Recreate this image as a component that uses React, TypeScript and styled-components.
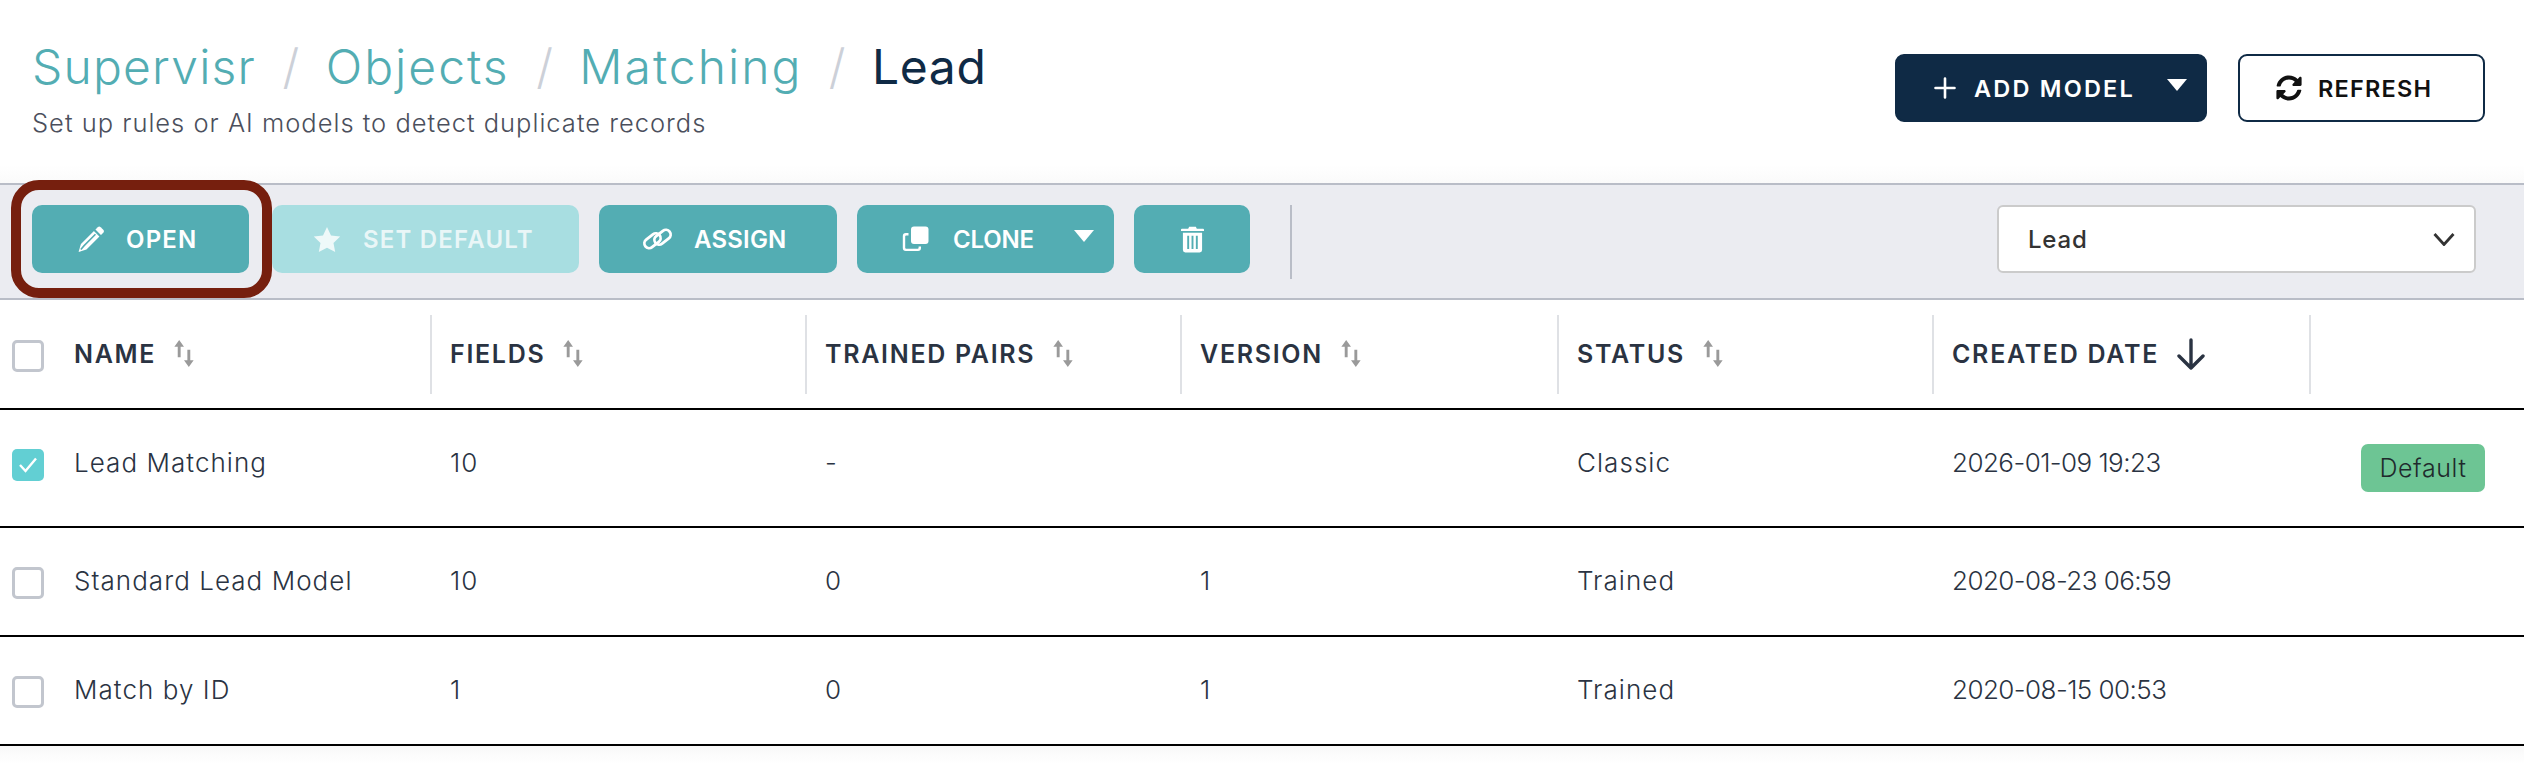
import React from "react";
import styled, { createGlobalStyle } from "styled-components";

const teal = "#53adb3";
const navy = "#0f2a45";

const GlobalStyle = createGlobalStyle`
    html, body {
        margin: 0;
        padding: 0;
        background: #fff;
    }
    body {
        font-family: Inter, "Liberation Sans", sans-serif;
        color: #2a3342;
    }
`;

const Page = styled.div`
    position: relative;
    width: 2524px;
    height: 784px;
    overflow: hidden;
    background: #fff;
`;

const Header = styled.header`
    height: 183px;
    box-sizing: border-box;
    padding: 36px 39px 0 32px;
    display: flex;
    justify-content: space-between;
    align-items: flex-start;
    background: linear-gradient(to bottom, #fff 165px, #fafafa 183px);
`;

const Crumbs = styled.h1`
    margin: 0;
    font-size: 48px;
    line-height: 62px;
    font-weight: 300;
    display: flex;
`;

const Crumb = styled.span<{ $current?: boolean; $tracking: number }>`
    color: ${props => props.$current ? navy : teal};
    font-weight: ${props => props.$current ? 400 : 300};
    letter-spacing: ${props => props.$tracking}px;
`;

const Slash = styled.span`
    color: #ccd0d8;
    margin: 0 26.5px;
    font-weight: 300;
`;

const Subtitle = styled.p`
    margin: 9px 0 0;
    font-size: 25.5px;
    line-height: 32px;
    font-weight: 300;
    color: #4b4f5c;
    letter-spacing: 1px;
`;

const HeaderActions = styled.div`
    display: flex;
    gap: 31px;
    margin-top: 18px;
`;

const HeaderButton = styled.button<{ $dark?: boolean; $width: number }>`
    position: relative;
    width: ${props => props.$width}px;
    height: 68px;
    box-sizing: border-box;
    border-radius: 9px;
    border: 2px solid ${navy};
    background: ${props => props.$dark ? navy : "#fff"};
    color: ${props => props.$dark ? "#fff" : "#111"};
    font: 600 23.5px Inter, sans-serif;
    letter-spacing: ${props => props.$dark ? 2.2 : 1.2}px;
    display: flex;
    align-items: center;
    gap: ${props => props.$dark ? 18 : 16}px;
    padding: 0 0 0 ${props => props.$dark ? 37 : 36}px;
`;

const Toolbar = styled.div`
    height: 117px;
    box-sizing: border-box;
    background: #ebecf1;
    border-top: 2px solid #b9bdc7;
    border-bottom: 2px solid #b9bdc7;
    padding: 20px 48px 0 32px;
    display: flex;
    align-items: flex-start;
`;

const ActionButton = styled.button<{ $width: number; $pad?: number; $gap?: number; $tracking?: number; $disabled?: boolean }>`
    position: relative;
    width: ${props => props.$width}px;
    height: 68px;
    border: none;
    border-radius: 10px;
    background: ${props => props.$disabled ? "#a8dee1" : teal};
    color: ${props => props.$disabled ? "rgba(255,255,255,0.75)" : "#fff"};
    font: 600 24px Inter, sans-serif;
    letter-spacing: ${props => props.$tracking ?? 1.2}px;
    display: flex;
    align-items: center;
    justify-content: ${props => props.$pad ? "flex-start" : "center"};
    gap: ${props => props.$gap ?? 22}px;
    padding: 0 0 0 ${props => props.$pad ?? 0}px;
    flex-shrink: 0;
`;

const ActionGroup = styled.div`
    display: flex;
    gap: 20px;
`;

const OpenGap = styled.span`
    width: 3px;
    margin-left: -20px;
`;

const OpenHighlight = styled.div`
    position: absolute;
    left: 11px;
    top: 180px;
    width: 261px;
    height: 118px;
    box-sizing: border-box;
    border: 10px solid #761f0e;
    border-radius: 28px;
    pointer-events: none;
`;

const Caret = styled.span<{ $top: number; $right: number }>`
    position: absolute;
    top: ${props => props.$top}px;
    right: ${props => props.$right}px;
    width: 0;
    height: 0;
    border-left: 10px solid transparent;
    border-right: 10px solid transparent;
    border-top: 12px solid #fff;
`;

const ToolbarDivider = styled.div`
    width: 2px;
    height: 74px;
    background: #b9bdc7;
    margin-left: 40px;
`;

const ObjectSelect = styled.div`
    margin-left: auto;
    width: 479px;
    height: 68px;
    box-sizing: border-box;
    background: #fff;
    border: 2px solid #cbcbcb;
    border-radius: 6px;
    padding: 0 19px 0 29px;
    display: flex;
    align-items: center;
    justify-content: space-between;
    font-size: 24px;
    font-weight: 500;
    letter-spacing: 0.8px;
    color: #333;
`;

const columns = "74px 356px 375px 375px 377px 375px 377px 1fr";

const HeadRow = styled.div`
    display: grid;
    grid-template-columns: ${columns};
    height: 110px;
    box-sizing: border-box;
    padding-top: 15px;
    border-bottom: 2px solid #000;
`;

const BodyRow = styled.div<{ $height: number }>`
    display: grid;
    grid-template-columns: ${columns};
    height: ${props => props.$height}px;
    box-sizing: border-box;
    border-bottom: 2px solid #000;
`;

const HeadCell = styled.div<{ $divider?: boolean }>`
    height: 79px;
    box-sizing: border-box;
    display: flex;
    align-items: center;
    gap: 17px;
    padding-left: ${props => props.$divider ? 18 : 0}px;
    border-left: ${props => props.$divider ? "2px solid #dfe1e5" : "none"};
    font-size: 25px;
    font-weight: 600;
    color: #2a3342;
    letter-spacing: 1.7px;
    padding-bottom: 2px;
`;

const CheckCell = styled.div<{ $top: number }>`
    padding: ${props => props.$top}px 0 0 12px;
`;

const CheckBox = styled.div<{ $checked?: boolean }>`
    width: 32px;
    height: 32px;
    box-sizing: border-box;
    border-radius: 5px;
    border: ${props => props.$checked ? "none" : "3px solid #c2c6ce"};
    background: ${props => props.$checked ? "#62cfd3" : "#fff"};
    display: flex;
    align-items: center;
    justify-content: center;
`;

const Cell = styled.div<{ $first?: boolean; $date?: boolean }>`
    padding: 37px 0 0 ${props => props.$first ? 0 : 20}px;
    font-size: 26px;
    line-height: 32px;
    font-weight: 300;
    color: #2a3342;
    letter-spacing: ${props => props.$date ? -0.55 : 1.05}px;
`;

const BadgeCell = styled.div`
    padding: 34px 0 0 52px;
`;

const Badge = styled.span`
    display: flex;
    align-items: center;
    justify-content: center;
    width: 124px;
    height: 48px;
    border-radius: 7px;
    background: #6dc594;
    color: #1f2a2c;
    font-size: 25px;
    font-weight: 300;
    letter-spacing: 0.6px;
`;

const BottomFade = styled.div`
    height: 38px;
    background: linear-gradient(to bottom, #f8f8f8, #fff 18px);
`;

function PencilIcon() {
    return (
        <svg width="28" height="27" viewBox="0 0 26 26">
            <path fill="#fff" d="M19.500 1.200a2 2 0 0 1 2.800 0l2.500 2.500a2 2 0 0 1 0 2.800l-2.200 2.200-5.300-5.300z" />
            <path fill="#fff" d="M15.800 4.900l5.300 5.300L8.600 22.700 1 25l2.300-7.600z" />
            <path fill="none" stroke={teal} strokeWidth="1.500" d="M6.400 18.900L17.300 8M3.200 22.600l3.200-3.700" />
        </svg>
    );
}

function StarIcon() {
    return (
        <svg width="30" height="27" viewBox="0 0 28 27" fill="rgba(255,255,255,0.8)">
            <path d="M14 1l4 8.400 9.200 1.200-6.700 6.400 1.700 9.100L14 21.700l-8.200 4.400 1.700-9.100L.8 10.600 10 9.400z" />
        </svg>
    );
}

function LinkIcon() {
    return (
        <svg width="31" height="22" viewBox="0 0 31 22" fill="none" stroke="#fff" strokeWidth="2.800">
            <rect x="1.500" y="8" width="18" height="9.500" rx="4.750" transform="rotate(-38 10.500 12.750)" />
            <rect x="11.500" y="4.500" width="18" height="9.500" rx="4.750" transform="rotate(-38 20.500 9.250)" />
        </svg>
    );
}

function CloneIcon() {
    return (
        <svg width="27" height="27" viewBox="0 0 27 27" fill="#fff">
            <rect x="9" y="0.500" width="17.500" height="17.500" rx="3" />
            <path d="M6.500 7v2.400H4.200a1 1 0 0 0-1 1v11.400a1 1 0 0 0 1 1h11.400a1 1 0 0 0 1-1v-1.300H19v1.600a3 3 0 0 1-3 3H3.800a3 3 0 0 1-3-3V10a3 3 0 0 1 3-3z" />
        </svg>
    );
}

function TrashIcon() {
    return (
        <svg width="23" height="27" viewBox="0 0 24 28" fill="#fff">
            <path d="M8.500 0.800h7l1 2H23a1 1 0 0 1 1 1v1.400H0V3.800a1 1 0 0 1 1-1h6.500z" />
            <path fillRule="evenodd" d="M2 7h20v18a2.500 2.500 0 0 1-2.500 2.500h-15A2.500 2.500 0 0 1 2 25zM6.500 10v14h2V10zM11 10v14h2V10zM15.500 10v14h2V10z" />
        </svg>
    );
}

function RefreshIcon() {
    return (
        <svg width="26" height="26" viewBox="0 0 512 512" fill="#111">
            <path d="M370.720 133.280C339.458 104.008 298.888 87.962 255.848 88c-77.458.068-144.328 53.178-162.791 126.850-1.344 5.363-6.122 9.150-11.651 9.150H24.103c-7.498 0-13.194-6.807-11.807-14.176C33.933 94.924 134.813 8 256 8c66.448 0 126.791 26.136 171.315 68.685L463.030 40.970C478.149 25.851 504 36.559 504 57.941V192c0 13.255-10.745 24-24 24H345.941c-21.382 0-32.090-25.851-16.971-40.971l41.750-41.749zM32 296h134.059c21.382 0 32.090 25.851 16.971 40.971l-41.750 41.750c31.262 29.273 71.835 45.319 114.876 45.280 77.418-.070 144.315-53.144 162.787-126.849 1.344-5.363 6.122-9.150 11.651-9.150h57.304c7.498 0 13.194 6.807 11.807 14.176C478.067 417.076 377.187 504 256 504c-66.448 0-126.791-26.136-171.315-68.685L48.970 471.030C33.851 486.149 8 475.441 8 454.059V320c0-13.255 10.745-24 24-24z" />
        </svg>
    );
}

function PlusIcon() {
    return (
        <svg width="22" height="22" viewBox="0 0 22 22" stroke="#fff" strokeWidth="2.600" strokeLinecap="round">
            <path d="M11 1.500v19M1.500 11h19" />
        </svg>
    );
}

function ChevronIcon() {
    return (
        <svg width="22" height="13" viewBox="0 0 22 13" fill="none" stroke="#333" strokeWidth="2.800">
            <path d="M1.500 1l9.500 10.500L20.500 1" />
        </svg>
    );
}

function SortIcon() {
    return (
        <svg width="22" height="27" viewBox="0 0 22 28" fill="#9a9a9a">
            <path d="M6 0l5 7H7.500v11h-3V7H1z" />
            <path d="M16 28l-5-7h3.500V10h3v11H21z" />
        </svg>
    );
}

function SortDownIcon() {
    return (
        <svg width="30" height="32" viewBox="0 0 30 32" fill="none" stroke="#2a3342" strokeWidth="3.400" strokeLinecap="round" strokeLinejoin="round">
            <path d="M15 2v28M3 18l12 12 12-12" />
        </svg>
    );
}

function CheckMark() {
    return (
        <svg width="20" height="18" viewBox="0 0 20 18" fill="none" stroke="#fff" strokeWidth="2.400">
            <path d="M2 9l5.500 6L18 2.500" />
        </svg>
    );
}

const headings = ["NAME", "FIELDS", "TRAINED PAIRS", "VERSION", "STATUS"];

const rows = [
    { name: "Lead Matching", fields: "10", pairs: "-", version: "", status: "Classic", date: "2026-01-09 19:23", checked: true, isDefault: true, height: 118 },
    { name: "Standard Lead Model", fields: "10", pairs: "0", version: "1", status: "Trained", date: "2020-08-23 06:59", checked: false, isDefault: false, height: 109 },
    { name: "Match by ID", fields: "1", pairs: "0", version: "1", status: "Trained", date: "2020-08-15 00:53", checked: false, isDefault: false, height: 109 },
];

export default function App() {
    return (
        <Page>
            <GlobalStyle />
            <Header>
                <div>
                    <Crumbs>
                        <Crumb $tracking={1.2}>Supervisr</Crumb>
                        <Slash>/</Slash>
                        <Crumb $tracking={2}>Objects</Crumb>
                        <Slash>/</Slash>
                        <Crumb $tracking={2}>Matching</Crumb>
                        <Slash>/</Slash>
                        <Crumb $current $tracking={0.6}>Lead</Crumb>
                    </Crumbs>
                    <Subtitle>Set up rules or AI models to detect duplicate records</Subtitle>
                </div>
                <HeaderActions>
                    <HeaderButton $dark $width={312}>
                        <PlusIcon />
                        ADD MODEL
                        <Caret $top={23} $right={18} />
                    </HeaderButton>
                    <HeaderButton $width={247}>
                        <RefreshIcon />
                        REFRESH
                    </HeaderButton>
                </HeaderActions>
            </Header>
            <Toolbar>
                <ActionGroup>
                    <ActionButton $width={217} $pad={45} $gap={21}><PencilIcon />OPEN</ActionButton>
                    <OpenGap />
                    <ActionButton $width={307} $pad={40} $gap={21} $disabled><StarIcon />SET DEFAULT</ActionButton>
                    <ActionButton $width={238} $pad={43} $gap={21} $tracking={0.2}><LinkIcon />ASSIGN</ActionButton>
                    <ActionButton $width={257} $pad={45} $gap={24} $tracking={-0.2}>
                        <CloneIcon />CLONE
                        <Caret $top={25} $right={20} />
                    </ActionButton>
                    <ActionButton $width={116}><TrashIcon /></ActionButton>
                </ActionGroup>
                <ToolbarDivider />
                <ObjectSelect>
                    Lead
                    <ChevronIcon />
                </ObjectSelect>
            </Toolbar>
            <OpenHighlight />
            <HeadRow>
                <CheckCell $top={25}><CheckBox /></CheckCell>
                {headings.map((heading, i) => (
                    <HeadCell key={heading} $divider={i > 0}>
                        {heading}
                        <SortIcon />
                    </HeadCell>
                ))}
                <HeadCell $divider>
                    CREATED DATE
                    <SortDownIcon />
                </HeadCell>
                <HeadCell $divider />
            </HeadRow>
            {rows.map(row => (
                <BodyRow key={row.name} $height={row.height}>
                    <CheckCell $top={39}><CheckBox $checked={row.checked}>{row.checked && <CheckMark />}</CheckBox></CheckCell>
                    <Cell $first>{row.name}</Cell>
                    <Cell>{row.fields}</Cell>
                    <Cell>{row.pairs}</Cell>
                    <Cell>{row.version}</Cell>
                    <Cell>{row.status}</Cell>
                    <Cell $date>{row.date}</Cell>
                    <BadgeCell>{row.isDefault && <Badge>Default</Badge>}</BadgeCell>
                </BodyRow>
            ))}
            <BottomFade />
        </Page>
    );
}
